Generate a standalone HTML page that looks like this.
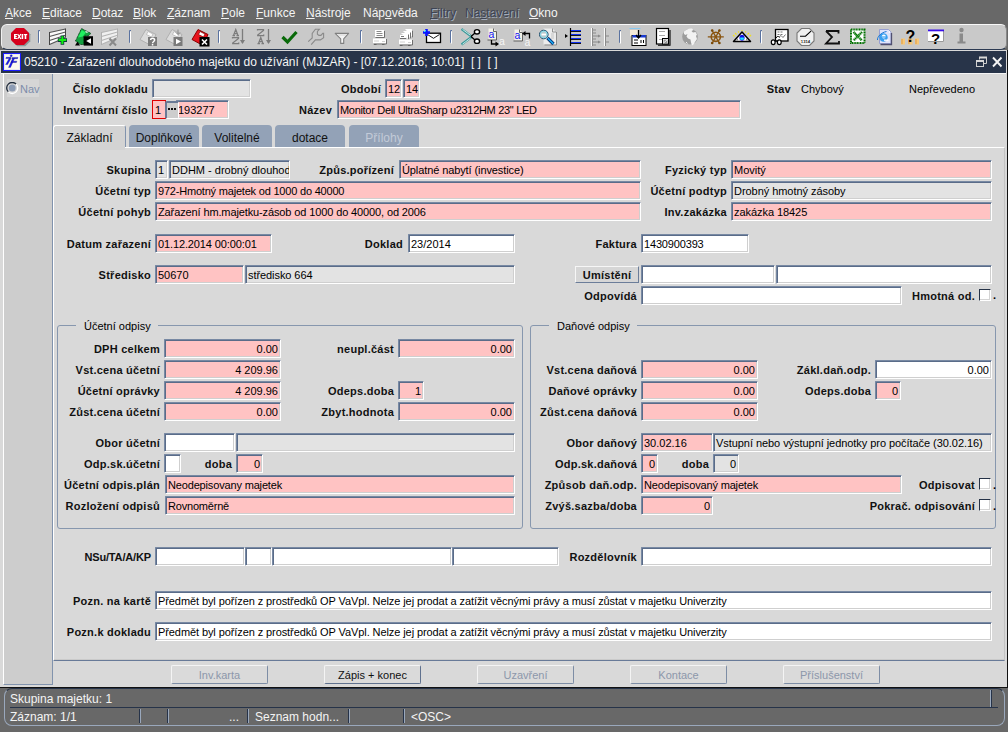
<!DOCTYPE html><html><head><meta charset="utf-8"><style>
*{margin:0;padding:0;box-sizing:border-box}
html,body{width:1008px;height:732px;overflow:hidden;background:#686868;font-family:"Liberation Sans", sans-serif;font-size:11px;color:#000}
div{position:absolute}
.f{border-style:solid;border-width:1px;border-color:#7889a3 #fff #fff #7889a3;box-shadow:inset 1px 1px 0 #5a6c89,inset -1px -1px 0 #cfcfcf;white-space:nowrap;overflow:hidden;line-height:16px;padding:1px 2px 0 2px;font-size:11px;border-radius:1px}
.l{font-weight:bold;white-space:nowrap;line-height:21px;height:19px;color:#111;letter-spacing:0.25px}
.t{white-space:nowrap}
.menu{top:5px;height:16px;line-height:16px;font-size:12px;color:#f4f4f4}
.menu u{text-decoration:underline;text-underline-offset:1px}
.dis{color:#3d4454;text-shadow:1px 1px 0 #a3abba}
.tab{top:125px;height:22px;background:#93a2b7;border-radius:4px 4px 0 0;text-align:center;line-height:26px;font-size:12px;color:#111}
.btn{top:665px;height:19px;width:97px;border:1px solid;border-color:#f4f4f4 #7d8da5 #7d8da5 #f4f4f4;text-align:center;line-height:19px;color:#8c97aa;font-size:11px;border-radius:2px;background:#dadada}
.sep{top:32px;width:3px;height:14px;border-left:1px solid #6a7fa0;border-right:1px solid #fff}
.ic{top:27px;width:20px;height:20px}
.chk{width:12px;height:12px;border:1px solid;border-color:#253247 #fff #fff #253247;background:#fff;box-shadow:inset -1px -1px 0 #d4d4d4}
</style></head><body>
<div class="menu" style="left:5px"><u>A</u>kce</div>
<div class="menu" style="left:42px"><u>E</u>ditace</div>
<div class="menu" style="left:92px"><u>D</u>otaz</div>
<div class="menu" style="left:133px"><u>B</u>lok</div>
<div class="menu" style="left:167px"><u>Z</u>áznam</div>
<div class="menu" style="left:221px"><u>P</u>ole</div>
<div class="menu" style="left:256px"><u>F</u>unkce</div>
<div class="menu" style="left:306px"><u>N</u>ástroje</div>
<div class="menu" style="left:363px">Náp<u>o</u>věda</div>
<div class="menu dis" style="left:430px"><u>F</u>iltry</div>
<div class="menu dis" style="left:465px">Na<u>s</u>tavení</div>
<div class="menu" style="left:529px"><u>O</u>kno</div>
<div style="left:1px;top:24px;width:1006px;height:26px;background:#c9c9c9;border-radius:6px;border-top:1px solid #f8f8f8;border-left:1px solid #f0f0f0;border-bottom:1px solid #2c3a52;border-right:1px solid #888"></div>
<svg style="position:absolute;left:0;top:0" width="1008" height="50" viewBox="0 0 1008 50"><path d="M16.5 28.5H24.5L29.5 33.5V40.5L24.5 45.5H16.5L11.5 40.5V33.5Z" fill="#4a6a6a" opacity=".5" transform="translate(.8 .8)"/><path d="M16 28H24L29 33V40L24 45H16L11 40V33Z" fill="#d6001c"/><g fill="#fff"><rect x="14" y="34" width="1.6" height="5"/><rect x="14" y="34" width="3" height="1.1"/><rect x="14" y="36" width="2.8" height="1"/><rect x="14" y="37.9" width="3" height="1.1"/><rect x="21.6" y="34" width="1.6" height="5"/><rect x="23.8" y="34" width="3.4" height="1.2"/><rect x="24.7" y="34" width="1.6" height="5"/></g><path d="M17.6 34l3.3 5M20.9 34l-3.3 5" stroke="#fff" stroke-width="1.3"/><path d="M40 30.5H38.5V42.5H40" fill="none" stroke="#5a72a0"/><path d="M39.5 31.5V43.5" stroke="#fff"/><path d="M49.5 32.5L65.5 29V37.5L49.5 44.5Z" fill="#fafafa"/><path d="M49.5 32.5L65.5 29M49.5 36.5L65.5 32M49.5 40.5L65.5 35.2M49.5 44.5L65.5 37.5" stroke="#555" stroke-width="1.1"/><path d="M49.5 32v13M65.5 28.5v9" stroke="#444" stroke-width="1"/><path d="M62.4 35.5v9.2M57.8 40.1h9.2" stroke="#0a3a3a" stroke-width="3.6"/><path d="M62.4 36.3v7.6M58.6 40.1h7.6" stroke="#10f010" stroke-width="2"/><path d="M75.5 41L81.5 28.5L91 33.5L88 36H84V44.5H80.5Z" fill="#14a040" stroke="#003a10" stroke-width=".9" stroke-dasharray="1 .6"/><path d="M78 37.5L81.8 30l4 2.5-3 4z" fill="#20f060"/><path d="M85.5 31.5l2 1" stroke="#fff" stroke-width="1.2"/><rect x="83.7" y="36.2" width="9.3" height="9.4" fill="#000"/><path d="M86.2 41L91 38.2V43.8Z" fill="#fff"/><path d="M75 45.5L77.5 41.5L80 45.5Z" fill="#000"/><path d="M101.5 32.5L117.5 29V37.5L101.5 44.5Z" fill="#f0f0f0"/><path d="M101.5 32.5L117.5 29M101.5 36.5L117.5 32M101.5 40.5L117.5 35.2M101.5 44.5L117.5 37.5" stroke="#b4b4b4" stroke-width="1.1"/><path d="M101.5 32v13M117.5 28.5v9" stroke="#b0b0b0" stroke-width="1"/><path d="M109.5 38.5l6.5 7M116 38.5l-6.5 7" stroke="#8a8a8a" stroke-width="2"/><path d="M131 30.5H129.5V42.5H131" fill="none" stroke="#5a72a0"/><path d="M130.5 31.5V43.5" stroke="#fff"/><path d="M140 39.5L146 29.5L156 34.5L151 45.5Z" fill="#dcdcdc" stroke="#b0b0b0"/><path d="M148 31.5l5 2.5l-1.5 3l-5 -2.5z" fill="#fff" stroke="#b0b0b0" stroke-width=".7"/><rect x="148" y="37" width="9" height="9" fill="#7a7a7a"/><path d="M150.6 40c0-2.4 4-2.4 4 0 0 1.4-2 1.6-2 3.2" stroke="#fff" stroke-width="1.5" fill="none"/><rect x="151.8" y="44" width="1.5" height="1.5" fill="#fff"/><path d="M166 39.5L172 29.5L182 34.5L177 45.5Z" fill="#dcdcdc" stroke="#b0b0b0"/><path d="M174 31.5l5 2.5l-1.5 3l-5 -2.5z" fill="#fff" stroke="#b0b0b0" stroke-width=".7"/><path d="M178 29.5v5l-2-2M178 34.5l2-2" stroke="#8a8a8a" fill="none"/><rect x="173.5" y="37" width="9" height="9" fill="#7a7a7a"/><path d="M176 38.8L181 41.5L176 44.2Z" fill="#fff"/><path d="M192 39.5L198 29.5L208 34.5L203 45.5Z" fill="#e8141e" stroke="#8a0000"/><path d="M200 31.5l5 2.5l-1.5 3l-5 -2.5z" fill="#fff" stroke="#8a0000" stroke-width=".7"/><rect x="199.5" y="37" width="10" height="9.5" fill="#000"/><path d="M202 39.5l5 5M207 39.5l-5 5" stroke="#fff" stroke-width="1.6"/><path d="M220 30.5H218.5V42.5H220" fill="none" stroke="#5a72a0"/><path d="M219.5 31.5V43.5" stroke="#fff"/><path d="M232.5 35.5h2.5M236.5 35.5h2.5M233.5 35.5L235.75 29.5L238 35.5M234.2 33.5h3.2 M232.5 38.5v-1h6v1L232.7 43v.5h6v-1 M257.5 30.5v-1h6v1L257.7 35v.5h6v-1 M257.5 43.5h2.5M261.5 43.5h2.5M258.5 43.5L260.75 37.5L263 43.5M259.2 41.5h3.2" stroke="#7c7c7c" stroke-width="1.25" fill="none"/><path d="M242.5 29v14M268.5 29v14" stroke="#7c7c7c" stroke-width="1.3"/><path d="M240 40h5l-2.5 4zM266 40h5l-2.5 4z" fill="#7c7c7c"/><path d="M282.5 37l5 5L296.5 32" stroke="#0a6a0a" stroke-width="3.2" fill="none"/><path d="M308.2 41.6L312.2 37.9V33.4L315.4 29.2H319.4L317.4 31.5V34.2L318.9 35.4H320.9L322.8 33.4H323.6V37.7L320.4 39.9H315.4L311.2 44.6" fill="none" stroke="#8a8a8a" stroke-width="1.1"/><path d="M335.2 33.4H348.6L343.7 38.9V43.4H340.7V38.9Z" fill="#f4f4f4" stroke="#808080" stroke-width="1.1" stroke-linejoin="round"/><path d="M338 35h8" stroke="#d8d8d8" stroke-width="1.2"/><path d="M362 30.5H360.5V42.5H362" fill="none" stroke="#5a72a0"/><path d="M361.5 31.5V43.5" stroke="#fff"/><rect x="375" y="30" width="9" height="7" fill="#fff"/><path d="M384.5 31v6.5h-9" stroke="#6f6f6f" fill="none"/><path d="M376.5 31.5h5M376.5 33.5h6M376.5 35.5h6" stroke="#8a8a8a"/><rect x="373" y="38.5" width="13" height="5" fill="#fff"/><path d="M386.5 39v5h-13" stroke="#6f6f6f" fill="none"/><path d="M374 41h5M382 41.5h3" stroke="#d0d0d0"/><path d="M374 44.5h2.5M382 44.5h2.5" stroke="#666" stroke-width="1.2"/><path d="M405.5 29.5h6l1 1v7" fill="#fff" stroke="#fff"/><path d="M412.5 30.5v7" stroke="#6f6f6f"/><path d="M403.5 31.5h6l1 1v6" fill="#fff" stroke="#fff"/><path d="M410.5 32.5v6" stroke="#6f6f6f"/><path d="M401.5 33.5h6l1 1v5" fill="#fff" stroke="#fff"/><path d="M408.5 34.5v5" stroke="#6f6f6f"/><rect x="400" y="35" width="6" height="3" fill="#fff"/><path d="M401 36.5h3" stroke="#777"/><path d="M400 38.5h6" stroke="#6f6f6f"/><rect x="399" y="39.5" width="13" height="5" fill="#fff"/><path d="M412.5 40v5h-13" stroke="#6f6f6f" fill="none"/><path d="M400 42h5M408 42.5h3" stroke="#d0d0d0"/><path d="M400 45.5h2.5M408 45.5h2.5" stroke="#666" stroke-width="1.2"/><rect x="426.5" y="33.2" width="14" height="9.3" fill="#fff" stroke="#000" stroke-width="1.3"/><path d="M427.5 34.5l6 3.8 6-3.8" stroke="#000" fill="none" stroke-width=".9"/><path d="M426.5 29v7M423 32.5h7" stroke="#0a14ff" stroke-width="2.6"/><path d="M424 31.5h1.5M425.5 30v1" stroke="#30e8ff" stroke-width="1"/><path d="M452 30.5H450.5V42.5H452" fill="none" stroke="#5a72a0"/><path d="M451.5 31.5V43.5" stroke="#fff"/><path d="M461.5 29l10 7.5M461.5 44.5l10-7.5" stroke="#3a9a9a" stroke-width="2.2"/><path d="M462.5 29.3l8 6M462.5 44.2l8-6" stroke="#e8f8f8" stroke-width=".8"/><path d="M471 36.5l4-3.5M471 36.5l4 3.5" stroke="#000" stroke-width="1.3"/><ellipse cx="477" cy="31.8" rx="2.6" ry="2.2" fill="#fff" stroke="#000" stroke-width="1.4"/><ellipse cx="477" cy="41.2" rx="2.6" ry="2.2" fill="#fff" stroke="#000" stroke-width="1.4"/><path d="M488.5 28.5h5l3 3v8h-8z" fill="#f4f2e8"/><path d="M493.5 28.5v3h3M496.5 31.5v8.5h-9" stroke="#555" fill="none" stroke-width=".9"/><text x="488.6" y="37.8" font-family="Liberation Sans" font-size="10.5" fill="#1010f0">a</text><path d="M491.5 40v4h5" stroke="#000" stroke-width="1.3" fill="none"/><path d="M495.5 41.5l3.5 2.5-3.5 2.5z" fill="#000"/><text x="499" y="45.3" font-family="Liberation Sans" font-size="10.5" fill="#f6f6f6">a</text><path d="M514.5 29.5h5l3 3v8h-8z" fill="#f4f2e8"/><path d="M519.5 29.5v3h3M522.5 32.5v8.5h-9" stroke="#555" fill="none" stroke-width=".9"/><text x="514.6" y="38.8" font-family="Liberation Sans" font-size="10.5" fill="#1010f0">a</text><path d="M529.5 38.5v-5h-5" stroke="#000" stroke-width="1.3" fill="none"/><path d="M525.5 31l-3.5 2.5 3.5 2.5z" fill="#000"/><text x="524.5" y="46" font-family="Liberation Sans" font-size="10.5" fill="#f6f6f6">a</text><path d="M543.5 28.5h9l3.5 3.5v12.5h-12.5z" fill="#ececec"/><path d="M552.5 28.5v3.5h3.5M556.5 32v13h-12" stroke="#888" fill="none" stroke-width=".9"/><path d="M551 34h3M551 36h3M551 38h3" stroke="#c4c4c4"/><circle cx="543.8" cy="34.5" r="4.3" fill="#b8c8cc" stroke="#1a4a6a" stroke-width="1"/><circle cx="543.8" cy="34.5" r="3.4" fill="none" stroke="#7fe0f0" stroke-width=".9"/><path d="M541.5 34.5h4.5" stroke="#fff" stroke-width="1.8"/><path d="M547.5 38l6 6" stroke="#062a6a" stroke-width="3.2"/><path d="M547.8 38.3l5.6 5.6" stroke="#1aa8f0" stroke-width="1.6"/><path d="M565 34l3 2-3 2z" fill="#000"/><path d="M570.5 28v18" stroke="#000" stroke-width="1.2"/><path d="M571 30.5h10M571 34.5h10M571 38.5h10M571 42.5h10" stroke="#1030f0" stroke-width="1.2"/><path d="M571 31.5h10M571 35.5h10M571 39.5h10M571 43.5h10" stroke="#000" stroke-width=".9"/><path d="M591.5 28v18M604.5 28v18" stroke="#fafafa" stroke-width="1"/><path d="M592.5 28v18M605.5 28v18" stroke="#8a8a8a" stroke-width="1"/><path d="M593 30h3M593 33h3M593 36h3M593 39h3M593 42h3M593 45h3M606 36h3M606 42h3" stroke="#8a8a8a" stroke-width="1.2"/><path d="M598 34.5l3 1.5-3 1.5zM598 40.5l3 1.5-3 1.5z" fill="#8a8a8a"/><path d="M596 36h2M596 42h2" stroke="#8a8a8a"/><path d="M621 30.5H619.5V42.5H621" fill="none" stroke="#5a72a0"/><path d="M620.5 31.5V43.5" stroke="#fff"/><path d="M629.5 28.5h11" stroke="#88c8f0"/><rect x="630" y="30" width="9" height="6" fill="#f4ead8"/><rect x="632" y="35.5" width="14" height="10" fill="#fff" stroke="#000"/><rect x="632.5" y="35" width="13.5" height="2.5" fill="#1a3ad0"/><path d="M638.5 30v7M636 35l2.5 3 2.5-3" stroke="#000" stroke-width="1.3" fill="none"/><path d="M634 40h4M634 43h4M641 40v3M643.5 40v3" stroke="#000"/><rect x="656.5" y="28.5" width="12" height="15.5" fill="#fff" stroke="#000" stroke-width="1.2"/><path d="M670 30v15.2h-12" stroke="#000" fill="none" stroke-width="1.1"/><path d="M659 31.5h6M659 35.5h6M659 39.5h3" stroke="#aaa"/><rect x="662.5" y="38.5" width="6" height="5.5" fill="#fff" stroke="#000"/><rect x="663.5" y="39.5" width="4" height="3.5" fill="#999"/><path d="M663.5 43l4-3.5" stroke="#fff" stroke-width=".8"/><circle cx="690" cy="36.8" r="7.8" fill="#9c9c9c"/><path d="M684 31.5c2-2 5-3.5 8-3l1.5 1.5-2 1 1.5 1.5 2.5-.5 1.5 2.5-1 1.5 1 3-2 3-1.5 2.5-1.5 1-1-3-.5-3-2.5-1-1.5-2 1-2.5-2 1-1.5-1z" fill="#f2f2f2"/><path d="M686 42l1.5 1.5" stroke="#f2f2f2"/><g stroke="#8a5510" fill="none"><circle cx="715.8" cy="36.8" r="4.6" stroke-width="1.6"/><path d="M707.80 36.80L723.80 36.80M711.80 29.87L719.80 43.73M719.80 29.87L711.80 43.73" stroke-width="1.3"/></g><circle cx="719.40" cy="43.04" r="1.3" fill="#7a4a08"/><circle cx="712.20" cy="43.04" r="1.3" fill="#7a4a08"/><circle cx="712.20" cy="30.56" r="1.3" fill="#7a4a08"/><circle cx="719.40" cy="30.56" r="1.3" fill="#7a4a08"/><circle cx="715.8" cy="36.8" r="1.2" fill="#8a5510"/><path d="M733.5 41.5L742 32L750.5 41.5Z" fill="#fff" stroke="#000" stroke-width="1.5" stroke-linejoin="round"/><path d="M735.5 40.5l2.5-2.5v2.5zM748.5 40.5l-2.5-2.5v2.5z" fill="#888"/><ellipse cx="742" cy="37.8" rx="2.6" ry="3" fill="#1010e0"/><rect x="740.2" y="37.5" width="3.6" height="2.3" fill="#20e8ff"/><path d="M733 35l1.5 1.5M735 33l1.5 1.5M738 31.5l1 1M742 30v1M746 31.5l-1 1M749 33l-1.5 1.5M751 35l-1.5 1.5" stroke="#f0e020" stroke-width="1.1"/><path d="M762 30.5H760.5V42.5H762" fill="none" stroke="#5a72a0"/><path d="M761.5 31.5V43.5" stroke="#fff"/><rect x="775.5" y="29.5" width="12.5" height="11.5" fill="#fff" stroke="#000" stroke-width="1.3"/><path d="M777.5 32h2M780.5 32h2M777.5 34.5h2M780.5 34.5h2M779 37l2-1.5 2 2 2.5-3" stroke="#666" fill="none" stroke-width=".9"/><path d="M776 38c1-2 2.5-2 3.5-.5" stroke="#000" fill="none"/><ellipse cx="773.2" cy="42.2" rx="1.9" ry="2.4" fill="#fff" stroke="#000" stroke-width="1.2"/><ellipse cx="779.3" cy="42.2" rx="1.9" ry="2.4" fill="#fff" stroke="#000" stroke-width="1.2"/><path d="M775 41h2.5" stroke="#000"/><path d="M801.5 28.5h8l4.5 4.5v8l-4.5 4.5h-8l-4.5-4.5v-8z" fill="#f0f0f0" stroke="#777" stroke-width="1.1"/><path d="M800 36.2h5.5l5.5-5" stroke="#000" fill="none" stroke-width="1.1"/><path d="M801 39.5h9v3.5h-9z" fill="#fff"/><text x="805.5" y="42.8" font-family="Liberation Sans" font-weight="bold" font-size="4.2" fill="#111" text-anchor="middle">1314</text><path d="M826 31h12.5v2.5M826 31l6 6-6 6.5h13v-2.5" fill="none" stroke="#111" stroke-width="1.8"/><rect x="851" y="29.5" width="13.5" height="13.5" fill="#fff" stroke="#007000" stroke-width="2" stroke-dasharray="1.1 .5"/><path d="M853.5 32l8.5 8.5M862 32l-8.5 8.5" stroke="#007000" stroke-width="2.4" stroke-dasharray="1.2 .5"/><path d="M855 34l5.5 5.5" stroke="#30a030" stroke-width="1"/><path d="M879.5 29.5h9l2.5 2.5v11.5h-11.5z" fill="#e0e4fa" stroke="#9098d0" stroke-width=".9"/><path d="M891.5 33v11.5h-11" stroke="#505070" stroke-width="1.3" fill="none"/><circle cx="883.5" cy="37.5" r="4.2" fill="#3aa0f0"/><circle cx="883.8" cy="36.6" r="2" fill="#fff"/><path d="M881.5 37h5" stroke="#3aa0f0" stroke-width="1.2"/><path d="M884 40.2h4.5" stroke="#fff" stroke-width="1.3"/><path d="M877.5 40c-.5-3 3.5-7.5 9-8.5" stroke="#1a78d8" fill="none" stroke-width="1"/><path d="M889 31.5l1 1" stroke="#fff" stroke-width="1.2"/><rect x="901" y="38.5" width="4" height="6" fill="#f8c878"/><rect x="908" y="38.5" width="4.5" height="6" fill="#f8c878"/><rect x="915" y="38.5" width="4" height="6" fill="#f8c878"/><path d="M902 39v5M909 39v5M916 39v5" stroke="#d09040" stroke-width=".8"/><text x="910.5" y="42" font-family="Liberation Sans" font-weight="bold" font-size="16" fill="#000" text-anchor="middle">?</text><rect x="928" y="30" width="16" height="11.5" fill="#fff"/><path d="M943.5 31v10.5H928" stroke="#9a9a9a" fill="none"/><rect x="928" y="29.5" width="16" height="1.8" fill="#3a10e8"/><text x="935.5" y="44" font-family="Liberation Sans" font-weight="bold" font-size="15" fill="#000" text-anchor="middle">?</text><circle cx="961.5" cy="30" r="2.2" fill="#8a8a8a"/><path d="M959.5 33.5h3.5v8h2.5v2h-8v-2h2z" fill="#8a8a8a"/></svg>
<div style="left:0;top:50px;width:1007px;height:637px;background:#d9d9d9"></div>
<div style="left:1007px;top:50px;width:1px;height:638px;background:#111"></div>
<div style="left:0;top:687px;width:1008px;height:1px;background:#111"></div>
<div style="left:1px;top:51px;width:1005px;height:22px;background:#283449"></div>
<div style="left:3px;top:53px;width:18px;height:18px;background:#fbfaee;border:1px solid #1a1aff;box-shadow:inset 0 0 0 1px #e8e8f0"></div>
<svg style="position:absolute;left:3px;top:53px" width="18" height="18"><g fill="#1818f8" stroke="#0a0a60" stroke-width=".3"><path d="M3.2 4.3h4.8l-.4 1.3H2.8z"/><circle cx="8.2" cy="2.8" r="1.05"/><path d="M6.1 5.5h1.9L4.6 11.6H2.6z"/><path d="M9.2 4.4h5.8l-.5 1.3H8.8z"/><path d="M9.6 5.5h1.9L7.5 14.4H5.5z"/><path d="M8.6 8.2h5.3l-.5 1.3H8.1z"/></g></svg>
<div class="t" style="left:24px;top:53px;font-size:12px;line-height:18px;color:#f4f4f4">05210 - Zařazení dlouhodobého majetku do užívání (MJZAR) - [07.12.2016; 10:01]&nbsp; [ ]&nbsp; [ ]</div>
<svg style="position:absolute;left:974px;top:56px" width="30" height="13" viewBox="0 0 30 13"><g fill="none" stroke="#d0d0d0" stroke-width="1"><path d="M5.5 3.5V1.5h7v6h-2.5"/><rect x="2.5" y="4.5" width="7" height="6"/></g><path d="M5 1.5h8M2 5h8" stroke="#d8d8d8" stroke-width="2"/><path d="M19 1.5l8.5 9M27.5 1.5l-8.5 9" stroke="#f4f4f4" stroke-width="1.9"/></svg>
<div style="left:1px;top:73px;width:1005px;height:1px;background:#f4f4f4"></div>
<div style="left:3px;top:74px;width:50px;height:611px;background:#cdcdcd;border-left:1px solid #fff;border-right:1px solid #8193ad;border-bottom:1px solid #8193ad"></div>
<div style="left:7px;top:79px;width:32px;height:18px;background:#d6d6d6"></div>
<svg style="position:absolute;left:6px;top:82px" width="13" height="13"><circle cx="6.2" cy="6" r="4.6" fill="#d8d8d8"/><path d="M2.3 9.9A5.5 5.5 0 0 1 10.1 2.1" stroke="#1f2a3a" stroke-width="1.3" fill="none"/><path d="M10.1 2.1A5.5 5.5 0 0 1 2.3 9.9" stroke="#fff" stroke-width="1.3" fill="none"/><circle cx="6.2" cy="6" r="3.5" fill="#8d9cb4"/></svg>
<div class="t" style="left:20px;top:81px;font-size:11px;line-height:16px;color:#7d8dab;letter-spacing:0px">Nav</div>
<div class="l" style="right:860px;top:79px;">Číslo dokladu</div>
<div class="f" style="left:152px;top:79px;width:99px;height:19px;background:#e3e3e3;"><span style="color:#000"></span></div>
<div class="l" style="right:860px;top:100px;">Inventární číslo</div>
<div style="left:152px;top:100px;width:14px;height:19px;background:#ffc3c3;border:1px solid #e00000;line-height:18px;padding-left:2px;font-size:11px">1</div>
<div class="f" style="left:176px;top:100px;width:53px;height:19px;background:#ffc3c3;padding-left:0;text-indent:1px"><span style="color:#000">193277</span></div>
<div style="left:165px;top:101px;width:14px;height:18px;background:#cdcdcd;border-top:2px solid #687a96;border-left:2px solid #687a96;border-right:1px solid #fff;border-bottom:1px solid #fff;border-radius:2px"></div>
<svg style="position:absolute;left:168px;top:108px" width="8" height="2"><rect x="0" width="2" height="2" fill="#111"/><rect x="3" width="2" height="2" fill="#111"/><rect x="6" width="2" height="2" fill="#111"/></svg>
<div class="l" style="right:627px;top:79px;">Období</div>
<div class="f" style="left:385px;top:79px;width:17px;height:19px;background:#ffc3c3;overflow:visible"><span style="color:#000">12</span></div>
<div class="f" style="left:403px;top:79px;width:17px;height:19px;background:#ffc3c3;overflow:visible"><span style="color:#000">14</span></div>
<div class="l" style="right:676px;top:100px;">Název</div>
<div class="f" style="left:337px;top:100px;width:404px;height:19px;background:#ffc3c3;letter-spacing:-0.31px;"><span style="color:#000">Monitor Dell UltraSharp u2312HM 23" LED</span></div>
<div class="l" style="right:217px;top:79px;">Stav</div>
<div class="t" style="left:801px;top:82px;line-height:14px">Chybový</div>
<div class="t" style="left:909px;top:82px;line-height:14px">Nepřevedeno</div>
<div class="tab" style="left:53px;width:73px;background:#d3d3d3;border:1px solid #fff;border-bottom:none;border-right:1px solid #8193ad;height:23px;line-height:24px;border-radius:3px 3px 0 0">Základní</div>
<div class="tab" style="left:129px;width:70px">Doplňkové</div>
<div class="tab" style="left:202px;width:70px">Volitelné</div>
<div class="tab" style="left:275px;width:70px">dotace</div>
<div class="tab" style="left:349px;width:70px;color:#c3cbd8">Přílohy</div>
<div style="left:53px;top:147px;width:952px;height:514px;background:#d9d9d9;border-top:1px solid #fff;border-left:1px solid #fff;border-right:1px solid #c4c4c4;border-bottom:1px solid #687a98;box-shadow:inset 0 -1px 0 #cacaca"></div>
<div style="left:54px;top:147px;width:71px;height:3px;background:#d3d3d3"></div>
<div class="l" style="right:857px;top:160px;">Skupina</div>
<div class="f" style="left:155px;top:160px;width:13px;height:19px;background:#e3e3e3;"><span style="color:#000">1</span></div>
<div class="f" style="left:169px;top:160px;width:121px;height:19px;background:#e3e3e3;"><span style="color:#000">DDHM - drobný dlouhodobý</span></div>
<div class="l" style="right:614px;top:160px;">Způs.pořízení</div>
<div class="f" style="left:399px;top:160px;width:242px;height:19px;background:#ffc3c3;letter-spacing:-0.1px;"><span style="color:#000">Úplatné nabytí (investice)</span></div>
<div class="l" style="right:281px;top:160px;">Fyzický typ</div>
<div class="f" style="left:731px;top:160px;width:261px;height:19px;background:#ffc3c3;"><span style="color:#000">Movitý</span></div>
<div class="l" style="right:857px;top:181px;">Účetní typ</div>
<div class="f" style="left:155px;top:181px;width:486px;height:19px;background:#ffc3c3;letter-spacing:-0.2px;"><span style="color:#000">972-Hmotný majetek od 1000 do 40000</span></div>
<div class="l" style="right:281px;top:181px;">Účetní podtyp</div>
<div class="f" style="left:731px;top:181px;width:261px;height:19px;background:#e3e3e3;letter-spacing:-0.05px;"><span style="color:#000">Drobný hmotný zásoby</span></div>
<div class="l" style="right:857px;top:202px;">Účetní pohyb</div>
<div class="f" style="left:155px;top:202px;width:486px;height:19px;background:#ffc3c3;letter-spacing:-0.12px;"><span style="color:#000">Zařazení hm.majetku-zásob od 1000 do 40000, od 2006</span></div>
<div class="l" style="right:281px;top:202px;">Inv.zakázka</div>
<div class="f" style="left:731px;top:202px;width:261px;height:19px;background:#ffc3c3;letter-spacing:-0.06px;"><span style="color:#000">zakázka 18425</span></div>
<div class="l" style="right:857px;top:234px;">Datum zařazení</div>
<div class="f" style="left:155px;top:234px;width:117px;height:19px;background:#ffc3c3;letter-spacing:-0.12px;"><span style="color:#000">01.12.2014 00:00:01</span></div>
<div class="l" style="right:605px;top:234px;">Doklad</div>
<div class="f" style="left:408px;top:234px;width:107px;height:19px;background:#fff;"><span style="color:#000">23/2014</span></div>
<div class="l" style="right:371px;top:234px;">Faktura</div>
<div class="f" style="left:641px;top:234px;width:108px;height:19px;background:#fff;letter-spacing:-0.16px;"><span style="color:#000">1430900393</span></div>
<div class="l" style="right:857px;top:265px;">Středisko</div>
<div class="f" style="left:155px;top:265px;width:89px;height:19px;background:#ffc3c3;"><span style="color:#000">50670</span></div>
<div class="f" style="left:245px;top:265px;width:270px;height:19px;background:#e3e3e3;letter-spacing:-0.07px;"><span style="color:#000">středisko 664</span></div>
<div style="left:575px;top:266px;width:64px;height:17px;border:1px solid;border-color:#f6f6f6 #6b7d99 #6b7d99 #f6f6f6;background:#d6d6d6;font-weight:bold;text-align:center;line-height:17px;color:#111;letter-spacing:.25px">Umístění</div>
<div class="f" style="left:641px;top:265px;width:134px;height:19px;background:#fff;"><span style="color:#000"></span></div>
<div class="f" style="left:776px;top:265px;width:216px;height:19px;background:#fff;"><span style="color:#000"></span></div>
<div class="l" style="right:371px;top:286px;">Odpovídá</div>
<div class="f" style="left:641px;top:286px;width:261px;height:19px;background:#fff;"><span style="color:#000"></span></div>
<div class="l" style="right:33px;top:286px;">Hmotná od.</div>
<div class="chk" style="left:979px;top:289px"></div>
<div class="t" style="left:993px;top:289px;font-weight:bold">.</div>
<div style="left:57px;top:325px;width:466px;height:204px;border:1px solid #8797ae;border-radius:3px"></div>
<div class="t" style="left:76px;top:319px;background:#d9d9d9;padding:0 7px 0 8px;line-height:14px">Účetní odpisy</div>
<div style="left:530px;top:325px;width:466px;height:204px;border:1px solid #8797ae;border-radius:3px"></div>
<div class="t" style="left:549px;top:319px;background:#d9d9d9;padding:0 7px 0 8px;line-height:14px">Daňové odpisy</div>
<div class="l" style="right:848px;top:339px;">DPH celkem</div>
<div class="f" style="left:164px;top:339px;width:117px;height:19px;background:#ffc3c3;text-align:right;"><span style="color:#000">0.00</span></div>
<div class="l" style="right:848px;top:360px;">Vst.cena účetní</div>
<div class="f" style="left:164px;top:360px;width:117px;height:19px;background:#ffc3c3;text-align:right;"><span style="color:#000">4 209.96</span></div>
<div class="l" style="right:848px;top:381px;">Účetní oprávky</div>
<div class="f" style="left:164px;top:381px;width:117px;height:19px;background:#ffc3c3;text-align:right;"><span style="color:#000">4 209.96</span></div>
<div class="l" style="right:848px;top:402px;">Zůst.cena účetní</div>
<div class="f" style="left:164px;top:402px;width:117px;height:19px;background:#ffc3c3;text-align:right;"><span style="color:#000">0.00</span></div>
<div class="l" style="right:614px;top:339px;">neupl.část</div>
<div class="f" style="left:398px;top:339px;width:117px;height:19px;background:#ffc3c3;text-align:right;"><span style="color:#000">0.00</span></div>
<div class="l" style="right:614px;top:381px;">Odeps.doba</div>
<div class="f" style="left:398px;top:381px;width:26px;height:19px;background:#ffc3c3;text-align:right;"><span style="color:#000">1</span></div>
<div class="l" style="right:614px;top:402px;">Zbyt.hodnota</div>
<div class="f" style="left:398px;top:402px;width:117px;height:19px;background:#ffc3c3;text-align:right;"><span style="color:#000">0.00</span></div>
<div class="l" style="right:371px;top:360px;">Vst.cena daňová</div>
<div class="f" style="left:641px;top:360px;width:117px;height:19px;background:#ffc3c3;text-align:right;"><span style="color:#000">0.00</span></div>
<div class="l" style="right:371px;top:381px;">Daňové oprávky</div>
<div class="f" style="left:641px;top:381px;width:117px;height:19px;background:#ffc3c3;text-align:right;"><span style="color:#000">0.00</span></div>
<div class="l" style="right:371px;top:402px;">Zůst.cena daňová</div>
<div class="f" style="left:641px;top:402px;width:117px;height:19px;background:#ffc3c3;text-align:right;"><span style="color:#000">0.00</span></div>
<div class="l" style="right:137px;top:360px;">Zákl.daň.odp.</div>
<div class="f" style="left:875px;top:360px;width:117px;height:19px;background:#fff;text-align:right;"><span style="color:#000">0.00</span></div>
<div class="l" style="right:137px;top:381px;">Odeps.doba</div>
<div class="f" style="left:875px;top:381px;width:26px;height:19px;background:#ffc3c3;text-align:right;"><span style="color:#000">0</span></div>
<div class="l" style="right:848px;top:433px;">Obor účetní</div>
<div class="f" style="left:164px;top:433px;width:71px;height:19px;background:#fff;"><span style="color:#000"></span></div>
<div class="f" style="left:236px;top:433px;width:279px;height:19px;background:#e3e3e3;"><span style="color:#000"></span></div>
<div class="l" style="right:848px;top:454px;">Odp.sk.účetní</div>
<div class="f" style="left:164px;top:454px;width:17px;height:19px;background:#fff;"><span style="color:#000"></span></div>
<div class="l" style="right:776px;top:454px;">doba</div>
<div class="f" style="left:236px;top:454px;width:27px;height:19px;background:#ffc3c3;text-align:right;"><span style="color:#000">0</span></div>
<div class="l" style="right:848px;top:475px;">Účetní odpis.plán</div>
<div class="f" style="left:165px;top:475px;width:350px;height:19px;background:#ffc3c3;letter-spacing:-0.16px;"><span style="color:#000">Neodepisovany majetek</span></div>
<div class="l" style="right:848px;top:496px;">Rozložení odpisů</div>
<div class="f" style="left:165px;top:496px;width:350px;height:19px;background:#ffc3c3;letter-spacing:-0.2px;"><span style="color:#000">Rovnoměrně</span></div>
<div class="l" style="right:371px;top:433px;">Obor daňový</div>
<div class="f" style="left:641px;top:433px;width:72px;height:19px;background:#ffc3c3;"><span style="color:#000">30.02.16</span></div>
<div class="f" style="left:713px;top:433px;width:279px;height:19px;background:#e3e3e3;letter-spacing:-0.055px;"><span style="color:#000">Vstupní nebo výstupní jednotky pro počítače (30.02.16)</span></div>
<div class="l" style="right:371px;top:454px;">Odp.sk.daňová</div>
<div class="f" style="left:641px;top:454px;width:17px;height:19px;background:#ffc3c3;text-align:right;"><span style="color:#000">0</span></div>
<div class="l" style="right:299px;top:454px;">doba</div>
<div class="f" style="left:713px;top:454px;width:26px;height:19px;background:#e3e3e3;text-align:right;"><span style="color:#000">0</span></div>
<div class="l" style="right:371px;top:475px;">Způsob daň.odp.</div>
<div class="f" style="left:641px;top:475px;width:261px;height:19px;background:#ffc3c3;letter-spacing:-0.16px;"><span style="color:#000">Neodepisovaný majetek</span></div>
<div class="l" style="right:33px;top:475px;">Odpisovat</div>
<div class="chk" style="left:979px;top:478px"></div>
<div class="t" style="left:993px;top:479px;font-weight:bold">.</div>
<div class="l" style="right:371px;top:496px;">Zvýš.sazba/doba</div>
<div class="f" style="left:641px;top:496px;width:72px;height:19px;background:#ffc3c3;text-align:right;"><span style="color:#000">0</span></div>
<div class="l" style="right:33px;top:496px;">Pokrač. odpisování</div>
<div class="chk" style="left:979px;top:499px"></div>
<div class="t" style="left:993px;top:500px;font-weight:bold">.</div>
<div class="l" style="right:857px;top:547px;letter-spacing:-0.15px;">NSu/TA/A/KP</div>
<div class="f" style="left:155px;top:547px;width:90px;height:19px;background:#fff;"><span style="color:#000"></span></div>
<div class="f" style="left:245px;top:547px;width:27px;height:19px;background:#fff;"><span style="color:#000"></span></div>
<div class="f" style="left:272px;top:547px;width:180px;height:19px;background:#fff;"><span style="color:#000"></span></div>
<div class="f" style="left:452px;top:547px;width:107px;height:19px;background:#fff;"><span style="color:#000"></span></div>
<div class="l" style="right:371px;top:547px;">Rozdělovník</div>
<div class="f" style="left:641px;top:547px;width:351px;height:19px;background:#fff;"><span style="color:#000"></span></div>
<div class="l" style="right:857px;top:591px;">Pozn. na kartě</div>
<div class="f" style="left:155px;top:591px;width:837px;height:19px;background:#fff;letter-spacing:-0.09px;"><span style="color:#000">Předmět byl pořízen z prostředků OP VaVpl. Nelze jej prodat a zatížit věcnými právy a musí zůstat v majetku Univerzity</span></div>
<div class="l" style="right:857px;top:622px;">Pozn.k dokladu</div>
<div class="f" style="left:155px;top:622px;width:837px;height:19px;background:#fff;letter-spacing:-0.09px;"><span style="color:#000">Předmět byl pořízen z prostředků OP VaVpl. Nelze jej prodat a zatížit věcnými právy a musí zůstat v majetku Univerzity</span></div>
<div class="btn" style="left:171px;">Inv.karta</div>
<div class="btn" style="left:324px;color:#111;border-color:#f4f4f4 #5f718e #5f718e #f4f4f4;">Zápis + konec</div>
<div class="btn" style="left:477px;">Uzavření</div>
<div class="btn" style="left:630px;">Kontace</div>
<div class="btn" style="left:783px;">Příslušenství</div>
<div style="left:4px;top:688px;width:1001px;height:38px;border:1px solid #9aa8bc;border-top-color:#263349;border-radius:8px"></div>
<div style="left:10px;top:707px;width:988px;height:1px;background:#263349"></div>
<div class="t" style="left:10px;top:691px;font-size:12px;line-height:16px;color:#f4f4f4">Skupina majetku: 1</div>
<div class="t" style="left:10px;top:709px;font-size:12px;line-height:16px;color:#f4f4f4">Záznam: 1/1</div>
<div style="left:139px;top:709px;width:2px;height:14px;border-left:1px solid #263349;border-right:1px solid #9aa8bc"></div>
<div style="left:167px;top:709px;width:2px;height:14px;border-left:1px solid #263349;border-right:1px solid #9aa8bc"></div>
<div style="left:247px;top:709px;width:2px;height:14px;border-left:1px solid #263349;border-right:1px solid #9aa8bc"></div>
<div style="left:348px;top:709px;width:2px;height:14px;border-left:1px solid #263349;border-right:1px solid #9aa8bc"></div>
<div style="left:403px;top:709px;width:2px;height:14px;border-left:1px solid #263349;border-right:1px solid #9aa8bc"></div>
<div class="t" style="left:229px;top:709px;font-size:12px;line-height:16px;color:#f4f4f4">...</div>
<div class="t" style="left:255px;top:709px;font-size:12px;line-height:16px;color:#f4f4f4">Seznam hodn...</div>
<div class="t" style="left:411px;top:709px;font-size:12px;line-height:16px;color:#f4f4f4">&lt;OSC&gt;</div>
<div style="left:990px;top:690px;width:2px;height:17px;border-left:1px solid #9aa8bc;border-right:1px solid #263349"></div>
</body></html>
